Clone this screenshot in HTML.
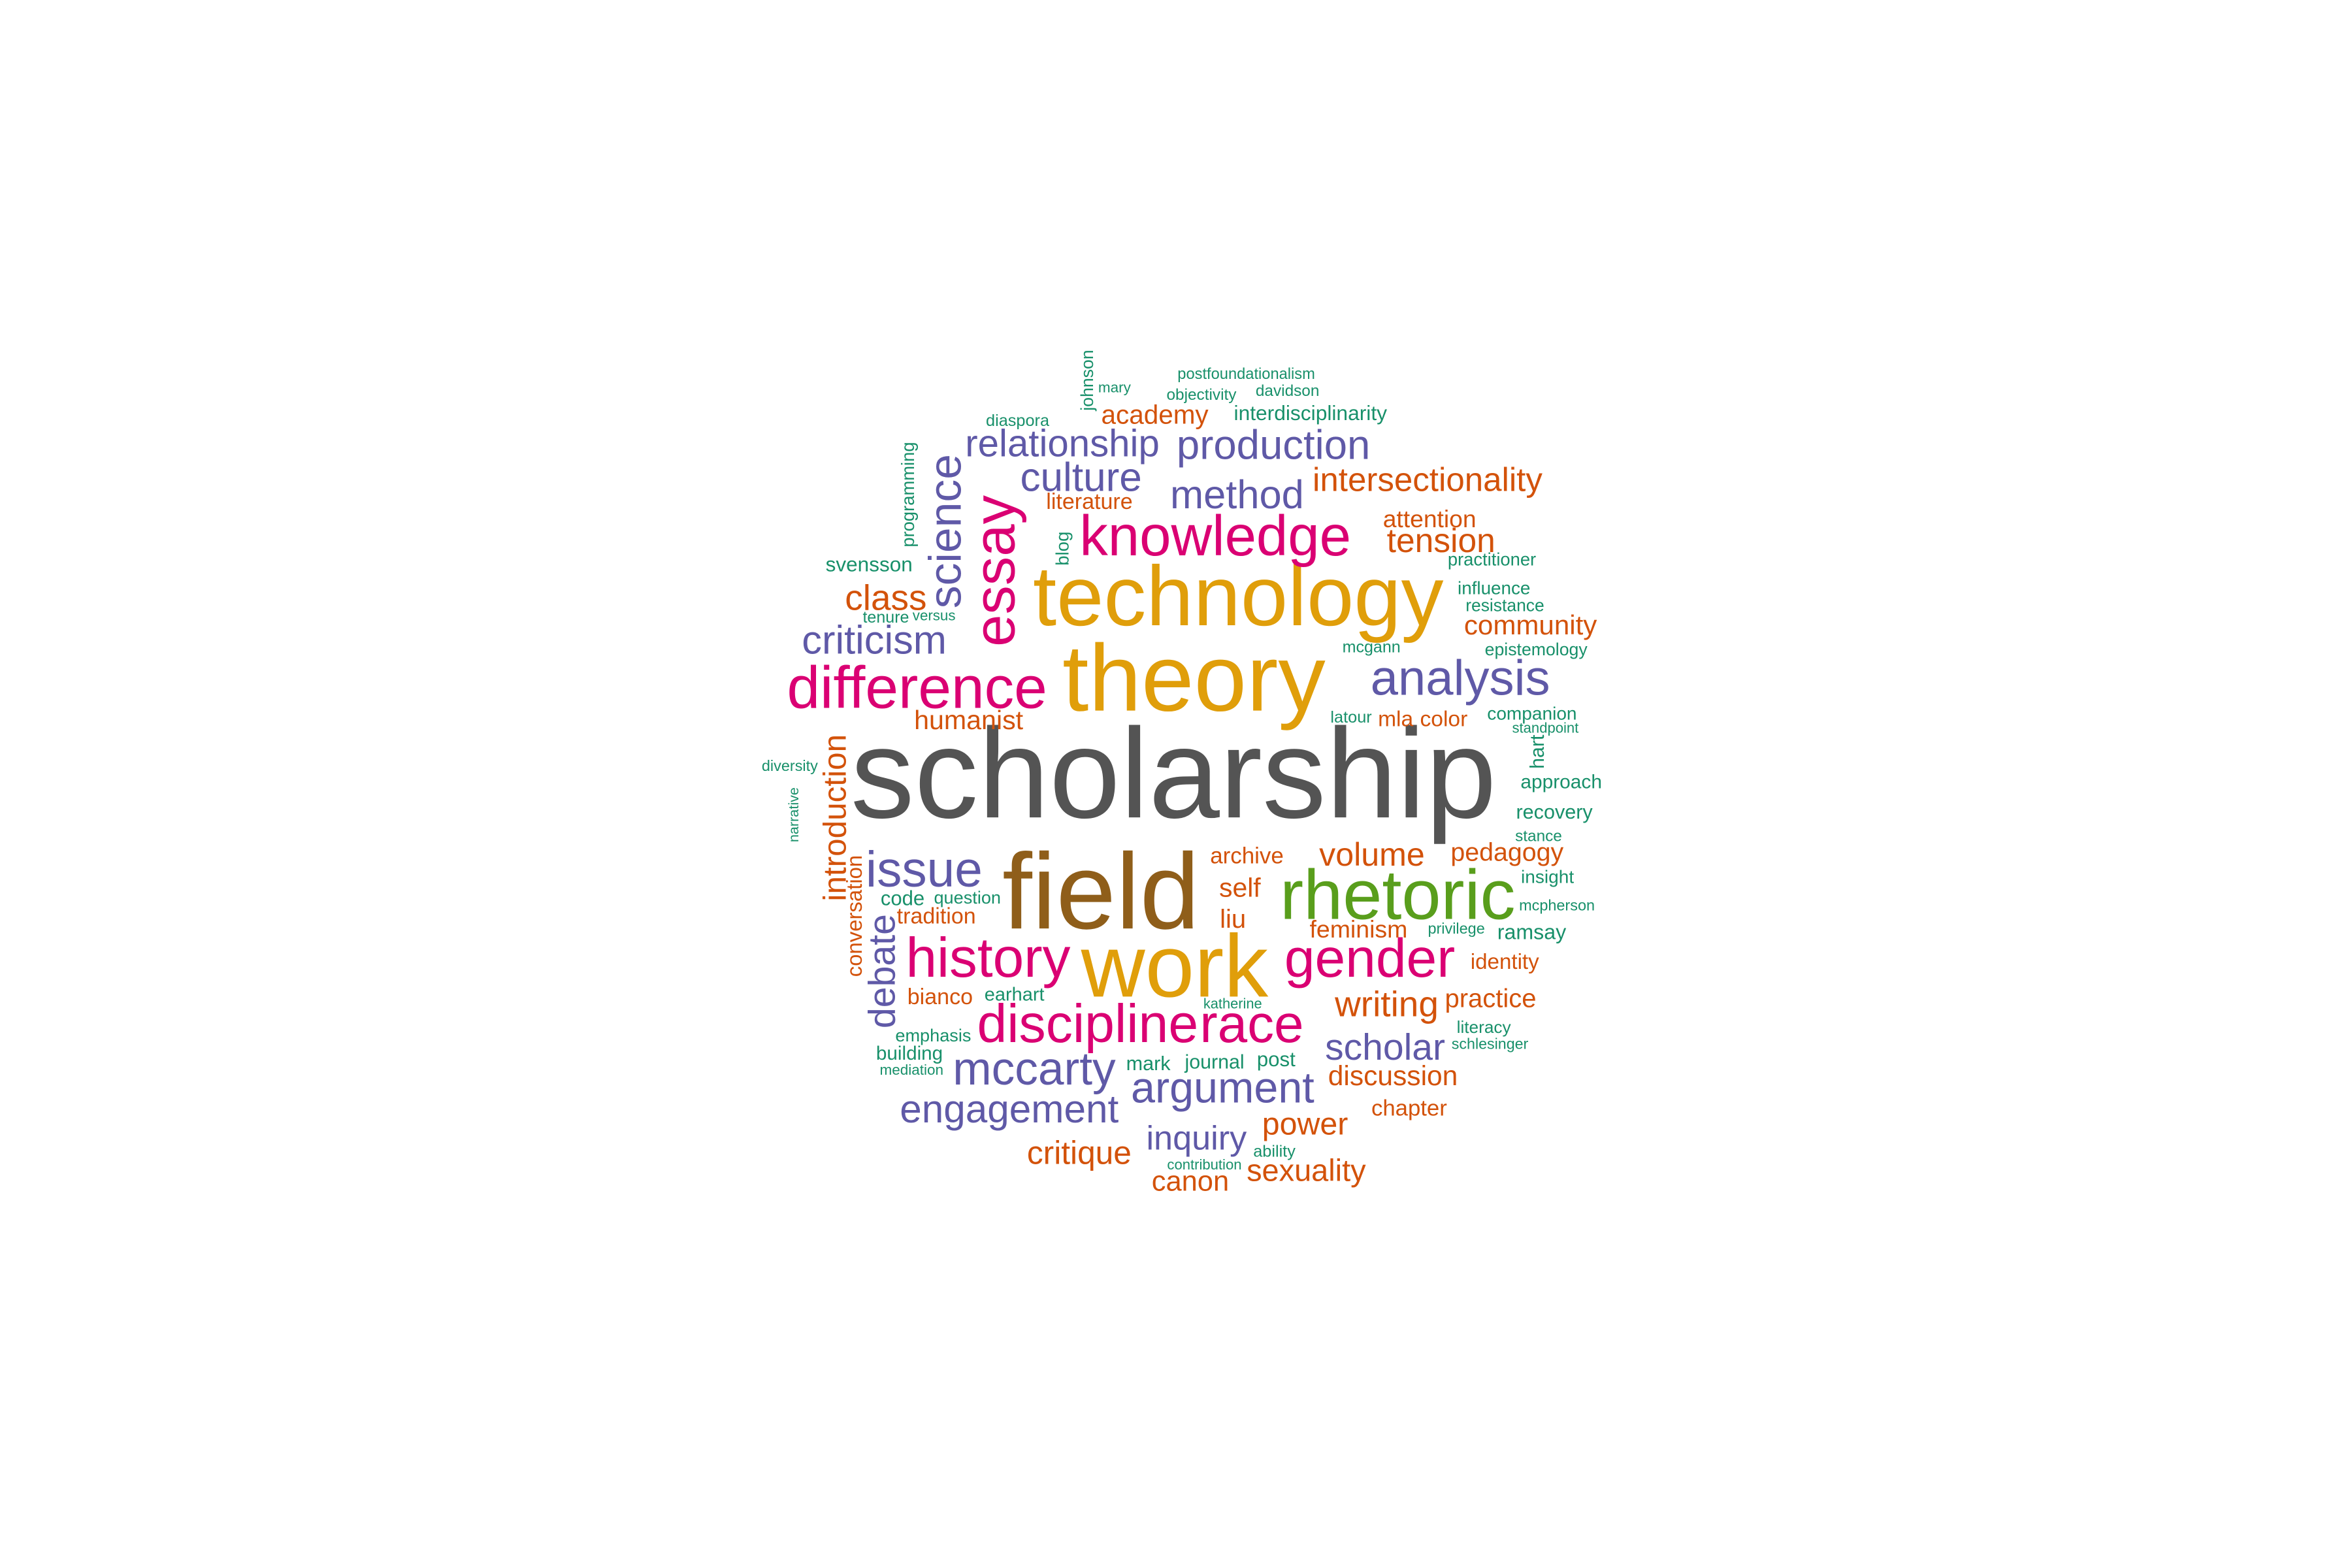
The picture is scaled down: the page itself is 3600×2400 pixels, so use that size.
<!DOCTYPE html>
<html><head><meta charset="utf-8"><style>
html,body{margin:0;padding:0;background:#fff;}
svg{display:block;}
text{font-family:"Liberation Sans",Arial,sans-serif;}
.g{fill:#18906A}.o{fill:#D3520A}.p{fill:#5F59A7}.m{fill:#DA0073}.l{fill:#599E1C}.y{fill:#E09E0A}.b{fill:#8F5E1A}.k{fill:#545454}
</style></head><body>
<svg width="3600" height="2400" viewBox="0 0 1565.2 1043.5" xmlns="http://www.w3.org/2000/svg">
<rect width="1565.2" height="1043.5" fill="#fff"/>
<text class="k" x="566" y="544" font-size="85">scholarship</text>
<text class="b" x="667" y="617.9" font-size="71.6">field</text>
<text class="y" x="719.4" y="663.2" font-size="59">work</text>
<text class="y" x="707" y="472.9" font-size="63">theory</text>
<text class="y" x="687.4" y="416.1" font-size="56.5">technology</text>
<text class="l" x="851.8" y="611.5" font-size="47">rhetoric</text>
<text class="m" x="718.4" y="369.5" font-size="37.8">knowledge</text>
<text class="m" x="523.7" y="471" font-size="39.6">difference</text>
<text class="m" x="854.7" y="650.1" font-size="36.5">gender</text>
<text class="m" x="602.8" y="650.1" font-size="37.2">history</text>
<text class="m" x="650.2" y="693.5" font-size="35.8">discipline</text>
<text class="m" x="798.4" y="693.5" font-size="35.6">race</text>
<text class="p" x="912" y="462.4" font-size="33.1">analysis</text>
<text class="p" x="752.6" y="733.8" font-size="28.9">argument</text>
<text class="p" x="634" y="721.7" font-size="31">mccarty</text>
<text class="p" x="576.1" y="590.1" font-size="33.3">issue</text>
<text class="p" x="598.8" y="746.9" font-size="26.2">engagement</text>
<text class="p" x="762.8" y="765.1" font-size="22.7">inquiry</text>
<text class="p" x="881.8" y="705.2" font-size="24.8">scholar</text>
<text class="p" x="642.3" y="303.6" font-size="25.3">relationship</text>
<text class="p" x="783" y="305.5" font-size="27.6">production</text>
<text class="p" x="678.9" y="326.7" font-size="27">culture</text>
<text class="p" x="778.7" y="338.2" font-size="26.7">method</text>
<text class="p" x="533.6" y="435.1" font-size="26.7">criticism</text>
<text class="m" transform="translate(674.9,430.4) rotate(-90)" font-size="38.6">essay</text>
<text class="p" transform="translate(639.3,404.9) rotate(-90)" font-size="30.3">science</text>
<text class="p" transform="translate(595.5,684.4) rotate(-90)" font-size="24.9">debate</text>
<text class="o" transform="translate(562.8,599.8) rotate(-90)" font-size="21.5">introduction</text>
<text class="o" transform="translate(573.5,650.1) rotate(-90)" font-size="14.3">conversation</text>
<text class="g" transform="translate(531.2,560.5) rotate(-90)" font-size="9.4">narrative</text>
<text class="g" transform="translate(608.3,364.2) rotate(-90)" font-size="11.9">programming</text>
<text class="g" transform="translate(727.3,273.4) rotate(-90)" font-size="11.6">johnson</text>
<text class="g" transform="translate(711,376.4) rotate(-90)" font-size="12">blog</text>
<text class="g" transform="translate(1027.3,511.7) rotate(-90)" font-size="13.2">hart</text>
<text class="g" x="730.8" y="261.1" font-size="9.8">mary</text>
<text class="g" x="783.6" y="252.2" font-size="10.3">postfoundationalism</text>
<text class="g" x="776.3" y="266.2" font-size="10.6">objectivity</text>
<text class="g" x="835.6" y="263.5" font-size="10.6">davidson</text>
<text class="o" x="732.8" y="281.9" font-size="17.6">academy</text>
<text class="g" x="821.1" y="279.6" font-size="13.8">interdisciplinarity</text>
<text class="g" x="656.1" y="283.4" font-size="11">diaspora</text>
<text class="o" x="696.2" y="338.6" font-size="14.8">literature</text>
<text class="o" x="873.5" y="326.7" font-size="22.2">intersectionality</text>
<text class="o" x="920.3" y="350.9" font-size="16.2">attention</text>
<text class="o" x="922.9" y="367.3" font-size="22.4">tension</text>
<text class="g" x="963.4" y="376.4" font-size="11.9">practitioner</text>
<text class="g" x="970" y="395.4" font-size="12.1">influence</text>
<text class="g" x="975.3" y="406.8" font-size="11.5">resistance</text>
<text class="o" x="974.3" y="422.2" font-size="18.3">community</text>
<text class="g" x="893.3" y="434.1" font-size="10.9">mcgann</text>
<text class="g" x="988.1" y="436.1" font-size="11.6">epistemology</text>
<text class="g" x="885.4" y="480.8" font-size="11">latour</text>
<text class="o" x="917" y="483.3" font-size="14.6">mla</text>
<text class="o" x="945" y="483.3" font-size="14.6">color</text>
<text class="g" x="989.7" y="479" font-size="12.2">companion</text>
<text class="g" x="1006.3" y="487.6" font-size="9.6">standpoint</text>
<text class="g" x="549.4" y="380.3" font-size="13.7">svensson</text>
<text class="o" x="562.3" y="405.8" font-size="23.9">class</text>
<text class="g" x="574.1" y="414.3" font-size="10.9">tenure</text>
<text class="g" x="607.3" y="412.8" font-size="9.7">versus</text>
<text class="o" x="608.3" y="485.2" font-size="17.9">humanist</text>
<text class="g" x="506.9" y="513" font-size="10.2">diversity</text>
<text class="g" x="586" y="602.4" font-size="13.5">code</text>
<text class="g" x="621.5" y="601.4" font-size="11.8">question</text>
<text class="o" x="596.8" y="614.5" font-size="14.8">tradition</text>
<text class="o" x="603.8" y="668.3" font-size="14.8">bianco</text>
<text class="g" x="655.1" y="665.8" font-size="12.6">earhart</text>
<text class="g" x="595.8" y="693.1" font-size="11.8">emphasis</text>
<text class="g" x="583" y="705.2" font-size="12.9">building</text>
<text class="g" x="585.4" y="715.3" font-size="9.8">mediation</text>
<text class="g" x="749.4" y="712.1" font-size="13.3">mark</text>
<text class="g" x="788.5" y="711.2" font-size="13.2">journal</text>
<text class="g" x="836.4" y="709.6" font-size="13.6">post</text>
<text class="o" x="683.4" y="774.6" font-size="21.6">critique</text>
<text class="g" x="776.7" y="778.2" font-size="9.6">contribution</text>
<text class="o" x="766.4" y="792.3" font-size="18.9">canon</text>
<text class="g" x="800.8" y="671" font-size="9.5">katherine</text>
<text class="g" x="1011.9" y="524.6" font-size="13">approach</text>
<text class="g" x="1008.9" y="544.8" font-size="13.3">recovery</text>
<text class="g" x="1008.3" y="559.9" font-size="10.6">stance</text>
<text class="o" x="805.3" y="574.6" font-size="15.2">archive</text>
<text class="o" x="877.9" y="576.2" font-size="21.8">volume</text>
<text class="o" x="965.4" y="572.9" font-size="17.1">pedagogy</text>
<text class="o" x="811.3" y="596.8" font-size="17.8">self</text>
<text class="g" x="1012.2" y="587.7" font-size="12.2">insight</text>
<text class="o" x="811.8" y="617.3" font-size="17.4">liu</text>
<text class="g" x="1010.9" y="605.9" font-size="10.2">mcpherson</text>
<text class="o" x="871.5" y="623.9" font-size="16.3">feminism</text>
<text class="g" x="950.2" y="621.4" font-size="10.2">privilege</text>
<text class="g" x="996.4" y="625" font-size="14">ramsay</text>
<text class="o" x="978.6" y="644.7" font-size="14.4">identity</text>
<text class="o" x="888.3" y="676.4" font-size="23.9">writing</text>
<text class="o" x="961.5" y="670.3" font-size="17.4">practice</text>
<text class="g" x="969.4" y="687.5" font-size="11.4">literacy</text>
<text class="g" x="966" y="698" font-size="10.1">schlesinger</text>
<text class="o" x="883.8" y="722.2" font-size="18.5">discussion</text>
<text class="o" x="912.6" y="742.3" font-size="15.1">chapter</text>
<text class="o" x="839.9" y="755" font-size="21">power</text>
<text class="g" x="834" y="769.7" font-size="11">ability</text>
<text class="o" x="829.6" y="785.8" font-size="20.4">sexuality</text>
</svg>
</body></html>
